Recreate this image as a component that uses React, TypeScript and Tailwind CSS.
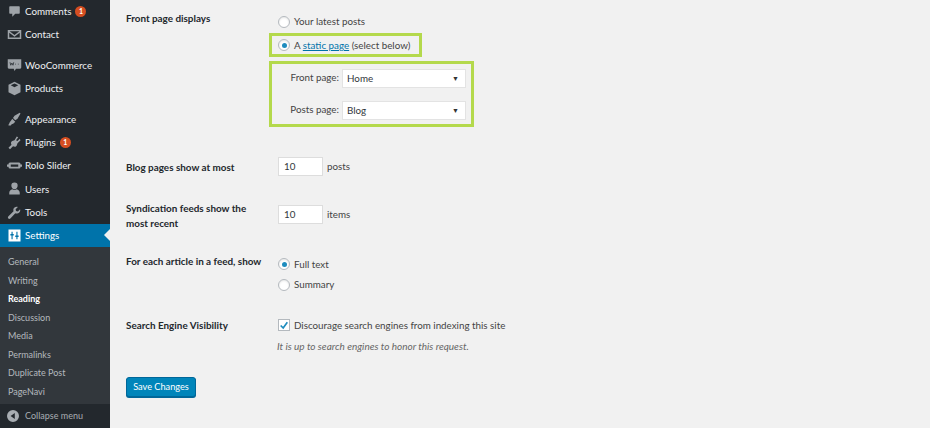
import type { ReactNode } from 'react'

const font = { fontFamily: 'Lato, sans-serif' }

function Icon({ children }: { children: ReactNode }) {
  return (
    <svg viewBox="0 0 20 20" className="h-[15px] w-[15px] shrink-0 fill-[#9ea3a8]">
      {children}
    </svg>
  )
}

const icons: Record<string, ReactNode> = {
  comments: <path d="M4 3h12a1 1 0 0 1 1 1v8a1 1 0 0 1-1 1h-5l-4 4v-4H4a1 1 0 0 1-1-1V4a1 1 0 0 1 1-1z" />,
  mail: <path d="M1 4h18v12H1V4zm2.500 1.500L10 10.500l6.500-5h-13zM3 7.500V14h14V7.500L10 13 3 7.500z" fillRule="evenodd" />,
  woo: (
    <>
      <path d="M1 3h18v11a1.500 1.500 0 0 1-1.500 1.500H12l-2 3-1-3H2.500A1.500 1.500 0 0 1 1 14V3z" />
      <path d="M4 7l1 4 1.500-3 1.500 3 1-4M11 9.500h1M14.500 9.500h1" className="fill-none stroke-[#23282d]" strokeWidth="1" />
    </>
  ),
  box: <path d="M10 1l8 4v10l-8 4-8-4V5l8-4zm0 2.200L5 5.700l5 2.600 5-2.600-5-2.500z" fillRule="evenodd" />,
  brush: <path d="M18 2l-1-1-7 4-2 3 3 3 3-2 4-7zM7 9l4 4-2 2c-1 1-3 1-4 3H2v-1c1-1 1-3 3-5l2-3z" />,
  plug: <path d="M13 2l2 1-3 4 2 1 3-3 1 2-4 4-1 3c-1 2-3 2-5 1l-4 4-2-2 4-4c-1-2-1-4 1-5l3-1 3-5z" />,
  slider: <path d="M4 6h12a2 2 0 0 1 2 2v.500h2v3h-2v.500a2 2 0 0 1-2 2H4a2 2 0 0 1-2-2v-.500H0v-3h2V8a2 2 0 0 1 2-2zm1 2.500v3h10v-3H5z" fillRule="evenodd" />,
  user: <path d="M10 2a4.200 4.200 0 0 1 4.200 4.400c0 2.400-1.900 4.600-4.200 4.600S5.800 8.800 5.800 6.400A4.200 4.200 0 0 1 10 2zM3 15.500c0-2 2-3.700 4-4.500 1.800 1.200 4.200 1.200 6 0 2 .8 4 2.500 4 4.500V18H3v-2.500z" />,
  wrench: <path d="M17.500 5.500l-3 3-2.500-.5-.5-2.500 3-3c-2.500-1-5.500.5-6 3-.2 1 0 2 .2 2.700L2 15c-1 1-1 2.200-.2 3s2 .8 3-.2l6.300-6.700c.7.200 1.700.4 2.700.2 2.700-.5 4.500-3.300 3.700-5.800z" />,
}

function MenuItem({ icon, label, badge }: { icon: string; label: string; badge?: boolean }) {
  return (
    <div className="flex h-[23.2px] items-center pl-[4px] text-[9.800px] text-[#eef0f2]">
      <span className="flex w-[21px] justify-center">
        <Icon>{icons[icon]}</Icon>
      </span>
      <span>{label}</span>
      {badge && (
        <span className="ml-[4px] flex h-[11px] w-[11px] items-center justify-center rounded-full bg-[#d54e21] text-[7px] font-bold text-white">
          1
        </span>
      )}
    </div>
  )
}

function Radio({ checked }: { checked?: boolean }) {
  return (
    <span className="flex h-[12px] w-[12px] shrink-0 items-center justify-center rounded-full border border-[#b4b9be] bg-white shadow-[inset_0_1px_2px_rgba(0,0,0,0.1)]">
      {checked && <span className="h-[5px] w-[5px] rounded-full bg-[#1e8cbe]" />}
    </span>
  )
}

function Select({ label, value }: { label: string; value: string }) {
  return (
    <div className="flex h-[19px] items-center justify-end">
      <span className="mr-[3px] -translate-y-[1px]">{label}</span>
      <div className="flex h-[19px] w-[124px] items-center justify-between border border-[#e3e3e3] bg-white pr-[6px] pl-[4px] text-[#32373c]">
        <span>{value}</span>
        <span className="text-[7px] text-[#333]">▼</span>
      </div>
    </div>
  )
}

function Row({ label, height, children }: { label: ReactNode; height: string; children: ReactNode }) {
  return (
    <div className={`grid grid-cols-[152px_1fr] ${height}`}>
      <div className="pr-[20px] text-[9.900px] leading-[15px] font-bold text-[#23282d]">{label}</div>
      <div>{children}</div>
    </div>
  )
}

const submenu = ['General', 'Writing', 'Reading', 'Discussion', 'Media', 'Permalinks', 'Duplicate Post', 'PageNavi']

export default function App() {
  return (
    <div className="flex h-[428px] w-[930px] overflow-hidden bg-[#f1f1f1]" style={font}>
      <aside className="flex w-[110px] shrink-0 flex-col bg-[#23282d]">
        <div>
          <MenuItem icon="comments" label="Comments" badge />
          <MenuItem icon="mail" label="Contact" />
        </div>
        <div className="mt-[7px]">
          <MenuItem icon="woo" label="WooCommerce" />
          <MenuItem icon="box" label="Products" />
        </div>
        <div className="mt-[8px]">
          <MenuItem icon="brush" label="Appearance" />
          <MenuItem icon="plug" label="Plugins" badge />
          <MenuItem icon="slider" label="Rolo Slider" />
          <MenuItem icon="user" label="Users" />
          <MenuItem icon="wrench" label="Tools" />
        </div>
        <div className="relative flex h-[23.200px] items-center bg-[#0073aa] pl-[4px] text-[9.800px] text-white">
          <span className="flex w-[21px] justify-center">
            <svg viewBox="0 0 20 20" className="h-[15px] w-[15px] fill-white">
              <path
                d="M2 2h16v16H2V2zm4 3v3H4.500v2H6v5h1.500v-5H9V8H7.500V5H6zm6.500 0v5H11v2h1.500v3H14v-3h1.500v-2H14V5h-1.500z"
                fillRule="evenodd"
              />
            </svg>
          </span>
          Settings
          <span className="absolute top-1/2 right-0 h-0 w-0 -translate-y-1/2 border-y-[6px] border-r-[6px] border-y-transparent border-r-[#f1f1f1]" />
        </div>
        <div className="flex-1 bg-[#32373c] pt-[6px]">
          {submenu.map((s) => (
            <div
              key={s}
              className={`flex h-[18.500px] items-center pl-[8px] text-[9px] ${
                s === 'Reading' ? 'font-bold text-white' : 'text-[#b4b9be]'
              }`}
            >
              {s}
            </div>
          ))}
        </div>
        <div className="flex h-[24px] items-center bg-[#23282d] pl-[7px] text-[9px] text-[#a8adb2]">
          <svg viewBox="0 0 20 20" className="h-[12px] w-[12px] fill-[#a8adb2]">
            <path d="M10 0a10 10 0 1 1 0 20 10 10 0 0 1 0-20zm3 5L6 10l7 5V5z" fillRule="evenodd" />
          </svg>
          <span className="ml-[6px]">Collapse menu</span>
        </div>
      </aside>

      <main className="flex-1 pt-[12px] pl-[16px] text-[9.800px] text-[#444]">
        <Row label={<div className="-mt-[1px]">Front page displays</div>} height="h-[145px]">
          <div className="flex h-[19px] items-center gap-[4px]">
            <Radio />
            Your latest posts
          </div>
          <div className="-ml-[9px] mt-[2px] flex h-[24px] w-[153px] items-center gap-[4px] border-[3px] border-[#b4d94c] pl-[6px]">
            <Radio checked />
            <span>
              A <span className="text-[#0073aa] underline">static page</span> (select below)
            </span>
          </div>
          <div className="-ml-[9px] mt-[4px] flex h-[66px] w-[205px] flex-col gap-[13px] border-[3px] border-[#b4d94c] pt-[5px] pr-[5px]">
            <Select label="Front page:" value="Home" />
            <Select label="Posts page:" value="Blog" />
          </div>
        </Row>

        <Row label={<div className="pt-[3px]">Blog pages show at most</div>} height="h-[48px]">
          <div className="flex items-center gap-[4px]">
            <div className="flex h-[19px] w-[45px] items-center border border-[#ddd] bg-white pl-[5px] text-[#32373c]">10</div>
            posts
          </div>
        </Row>

        <Row label={<div className="-mt-[4px]">Syndication feeds show the most recent</div>} height="h-[49px]">
          <div className="flex items-center gap-[4px]">
            <div className="flex h-[19px] w-[45px] items-center border border-[#ddd] bg-white pl-[5px] text-[#32373c]">10</div>
            items
          </div>
        </Row>

        <Row label={<div className="-mr-[20px]">For each article in a feed, show</div>} height="h-[61px]">
          <div className="flex h-[20px] items-center gap-[4px]">
            <Radio checked />
            Full text
          </div>
          <div className="flex h-[21px] items-center gap-[4px]">
            <Radio />
            Summary
          </div>
        </Row>

        <Row label={<div className="pt-[3px]">Search Engine Visibility</div>} height="h-[62px]">
          <div className="flex h-[20px] items-center gap-[4px]">
            <span className="flex h-[12px] w-[12px] items-center justify-center border border-[#b4b9be] bg-white">
              <svg viewBox="0 0 12 12" className="h-[11px] w-[11px] fill-none stroke-[#1e8cbe] stroke-[2]">
                <path d="M2 6l3 3 5-7" />
              </svg>
            </span>
            Discourage search engines from indexing this site
          </div>
          <div className="mt-[4px] -ml-[1px] text-[10px] italic text-[#666]">It is up to search engines to honor this request.</div>
        </Row>

        <div className="flex h-[20px] w-[70px] items-center justify-center rounded-[3px] border border-[#006799] bg-[#0085ba] text-[9.200px] text-white shadow-[0_1px_0_#006799]">
          Save Changes
        </div>
      </main>
    </div>
  )
}
